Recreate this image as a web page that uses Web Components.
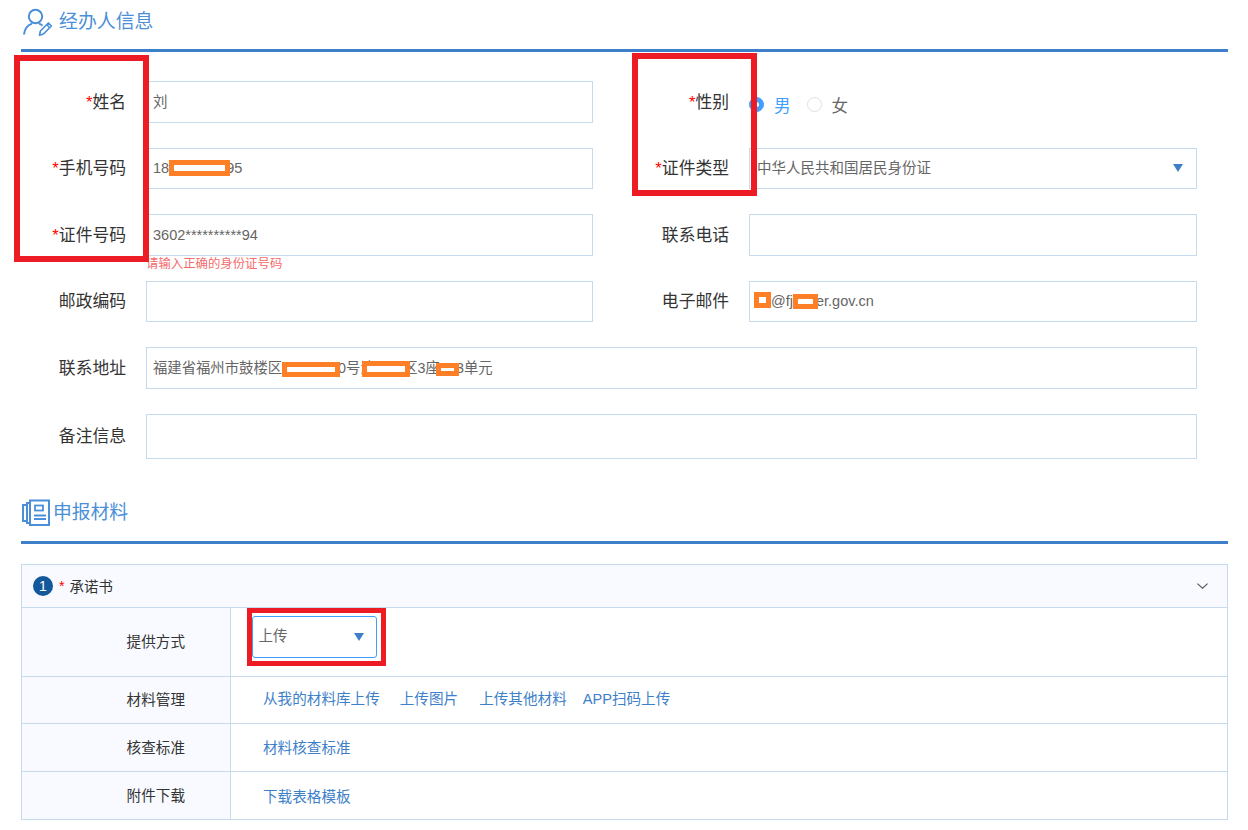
<!DOCTYPE html>
<html lang="zh">
<head>
<meta charset="utf-8">
<title>经办人信息</title>
<style>
    html, body { margin: 0; padding: 0; background: #fff; }
    body { font-family: "Liberation Sans", "Noto Sans CJK SC", sans-serif; }
</style>
</head>
<body>
<apply-page></apply-page>

<script>
const INK = '"Liberation Sans", "Noto Sans CJK SC", sans-serif';

// orange censor block, overlaps the text on either side
class RedactMark extends HTMLElement {
    connectedCallback() {
        const w = this.getAttribute('w') || '60';
        const h = this.getAttribute('h') || '16';
        const under = this.getAttribute('under') || '0';
        const over = this.getAttribute('over') || '0';
        const dy = this.getAttribute('dy') || '0';
        this.attachShadow({ mode: 'open' });
        this.shadowRoot.innerHTML = `
            <style>
                :host {
                    display: inline-block;
                    box-sizing: border-box;
                    width: ${w}px;
                    height: ${h}px;
                    margin-left: -${under}px;
                    margin-right: -${over}px;
                    border: solid #ff7f27;
                    border-width: 5px;
                    background: #fff;
                    vertical-align: middle;
                    position: relative;
                    top: ${dy}px;
                }
            </style>
        `;
    }
}

class SectionHead extends HTMLElement {
    connectedCallback() {
        const height = this.getAttribute('height') || '49';
        const low = this.getAttribute('low') || '10';
        const size = this.getAttribute('size') || '18.8';
        this.attachShadow({ mode: 'open' });
        this.shadowRoot.innerHTML = `
            <style>
                :host { display: block; margin: 0 20px 0 21px; }
                .head {
                    box-sizing: border-box;
                    display: flex;
                    align-items: center;
                    height: ${height}px;
                    padding: 0 0 ${low}px 1px;
                    color: #4a8fd8;
                    font-size: ${size}px;
                    font-family: ${INK};
                }
                .bar { height: 3px; background: #3d80c9; }
            </style>
            <div class="head"><slot name="icon"></slot><slot></slot></div>
            <div class="bar"></div>
        `;
    }
}

class FormField extends HTMLElement {
    connectedCallback() {
        const label = this.getAttribute('label') || '';
        const required = this.hasAttribute('required');
        const height = this.getAttribute('height') || '41.5';
        this.attachShadow({ mode: 'open' });
        this.shadowRoot.innerHTML = `
            <style>
                :host { display: grid; grid-template-columns: 105px 1fr; column-gap: 20px; align-items: center; position: relative; }
                .label { text-align: right; font-size: 16.8px; color: #333; white-space: nowrap; padding-bottom: 2px; }
                .label i { font-style: normal; color: #f00; }
                .box {
                    box-sizing: border-box;
                    height: ${height}px;
                    border: 1px solid #c6dcee;
                    padding: 0 6px;
                    display: flex;
                    align-items: center;
                    font-size: 14.5px;
                    color: #666;
                    white-space: nowrap;
                    background: #fff;
                }
                :host([bare]) .box { display: block; border: 0; padding: 0; }
                .msg { position: absolute; left: 125px; top: 40px; font-size: 12.4px; color: #f56c6c; white-space: nowrap; }
            </style>
            <div class="label">${required ? '<i>*</i>' : ''}${label}</div>
            <div class="box"><span><slot></slot></span></div>
            <div class="msg"><slot name="msg"></slot></div>
        `;
    }
}

class GenderRadio extends HTMLElement {
    connectedCallback() {
        this.attachShadow({ mode: 'open' });
        this.shadowRoot.innerHTML = `
            <style>
                :host { display: flex; align-items: center; box-sizing: border-box; height: 41.5px; padding-top: 6px; font-size: 16.6px; color: #666; }
                .dot { box-sizing: border-box; width: 15px; height: 15px; border-radius: 50%; border: 1px solid #dcdfe6; margin-right: 10px; background: #fff; }
                .on { background: #409eff; border-color: #409eff; position: relative; }
                .on::after { content: ""; position: absolute; left: 4px; top: 4px; width: 5px; height: 5px; border-radius: 50%; background: #fff; }
                .sel { color: #409eff; margin-right: 16px; }
            </style>
            <span class="dot on"></span><span class="sel">男</span>
            <span class="dot"></span><span>女</span>
        `;
    }
}

class SelectBox extends HTMLElement {
    connectedCallback() {
        this.attachShadow({ mode: 'open' });
        this.shadowRoot.innerHTML = `
            <style>
                :host {
                    display: flex; align-items: center; justify-content: space-between;
                    box-sizing: border-box;
                    height: 41.5px;
                    padding: 0 13px 0 7px;
                    border: 1px solid #c6dcee;
                    font-size: 14.5px;
                    color: #666;
                    background: #fff;
                }
                :host([focus]) { border-color: #409eff; border-radius: 3px; padding: 0 12px 0 5.5px; }
                .val { padding-bottom: 3px; }
                :host([focus]) .val { padding-bottom: 5px; }
                .arrow { width: 0; height: 0; border: solid transparent; border-width: 8px 5px 0; border-top-color: #3d80c9; }
            </style>
            <span class="val"><slot></slot></span>
            <span class="arrow"></span>
        `;
    }
}

class MatRow extends HTMLElement {
    connectedCallback() {
        const label = this.getAttribute('label') || '';
        const height = this.getAttribute('height') || '47';
        const pad = this.getAttribute('pad') || '32';
        const lift = this.getAttribute('lift') || '0';
        this.attachShadow({ mode: 'open' });
        this.shadowRoot.innerHTML = `
            <style>
                :host {
                    display: grid;
                    grid-template-columns: 209px 1fr;
                    height: ${height}px;
                    box-sizing: border-box;
                    border-top: 1px solid #c6dcee;
                }
                .label {
                    background: #f8faff;
                    border-right: 1px solid #c6dcee;
                    padding: 0 45px 2px 0;
                    display: flex;
                    align-items: center;
                    justify-content: flex-end;
                    font-size: 14.6px;
                    color: #333;
                }
                .cell { display: flex; align-items: center; padding: 0 0 ${lift}px ${pad}px; font-size: 14.6px; color: #3d80c9; }
            </style>
            <div class="label">${label}</div>
            <div class="cell"><slot></slot></div>
        `;
    }
}

class MatPanel extends HTMLElement {
    connectedCallback() {
        const index = this.getAttribute('index') || '1';
        const title = this.getAttribute('title') || '';
        this.attachShadow({ mode: 'open' });
        this.shadowRoot.innerHTML = `
            <style>
                :host { display: block; margin: 20px 20px 0 21px; border: 1px solid #c6dcee; }
                .top {
                    display: flex; align-items: center;
                    height: 42px;
                    padding: 0 19px 0 11px;
                    background: #f8faff;
                    font-size: 14.4px;
                    color: #333;
                }
                .num { width: 20px; height: 20px; border-radius: 50%; background: #14589c; color: #fff; font-size: 14px; line-height: 20px; text-align: center; margin-right: 6px; }
                .star { color: #f00; margin-right: 5px; }
                .chev { margin-left: auto; }
            </style>
            <div class="top">
                <span class="num">${index}</span><span class="star">*</span><span>${title}</span>
                <svg class="chev" width="11" height="6" viewBox="0 0 11 6" fill="none" stroke="#555" stroke-width="1.1"><path d="M.4.6 5.5 5.2 10.6.6"/></svg>
            </div>
            <slot></slot>
        `;
    }
}

class ApplyPage extends HTMLElement {
    connectedCallback() {
        this.attachShadow({ mode: 'open' });
        this.shadowRoot.innerHTML = `
            <style>
                :host { display: block; width: 1248px; height: 830px; position: relative; overflow: hidden; font-family: ${INK}; }
                .form {
                    display: grid;
                    grid-template-columns: 572px 573px;
                    column-gap: 31px;
                    row-gap: 25px;
                    margin: 29px 0 0 21px;
                    width: 1176px;
                }
                .wide { grid-column: 1 / 3; }
                .docs { margin-top: 32px; }
                .ring { position: absolute; box-sizing: border-box; border: 6px solid #ed1c24; outline: 1px solid rgba(237,28,36,.35); outline-offset: -1px; pointer-events: none; }
                .links { display: flex; }
                .links a:nth-child(2) { margin-left: 20px; }
                .links a:nth-child(3) { margin-left: 21px; }
                .links a:nth-child(4) { margin-left: 16px; }
                a { color: #3d80c9; text-decoration: none; }
                select-box.mini { width: 125px; height: 42px; }
            </style>
            <section-head height="49" low="10" size="18.9">
                <svg slot="icon" width="30" height="30" viewBox="0 0 30 30" fill="none" stroke="#4a8fd8" stroke-width="2" style="margin:6px 7px 0 0">
                    <circle cx="13.5" cy="8.5" r="6.7"/>
                    <path d="M2 26.5C2.5 21 6 17 10 15.6M17 15.6c1.4.5 2.5 1 3.5 2"/>
                    <path d="M17.5 27.2l.9-4.2 8-8 3 3-8 8z" stroke-width="1.7" stroke-linejoin="round"/>
                    <path d="M24.5 16.5l3 3" stroke-width="1.4"/>
                </svg>
                经办人信息
            </section-head>
            <div class="form">
                <form-field label="姓名" required><span style="display:inline-block;padding-bottom:3px">刘</span></form-field>
                <form-field label="性别" required bare><gender-radio></gender-radio></form-field>
                <form-field label="手机号码" required>18<redact-mark w="61" h="16" over="4" dy="-1"></redact-mark>95</form-field>
                <form-field label="证件类型" required bare><select-box>中华人民共和国居民身份证</select-box></form-field>
                <form-field label="证件号码" required>3602**********94<span slot="msg">请输入正确的身份证号码</span></form-field>
                <form-field label="联系电话"></form-field>
                <form-field label="邮政编码"></form-field>
                <form-field label="电子邮件"><redact-mark w="17" h="16" under="2" dy="-2"></redact-mark>@fj<redact-mark w="25" h="15" over="2"></redact-mark>er.gov.cn</form-field>
                <form-field label="联系地址" class="wide"><span style="display:inline-block;font-size:14.35px;padding-bottom:2px">福建省福州市鼓楼区<redact-mark w="58" h="15" over="2"></redact-mark>0号滨<redact-mark w="48" h="16" under="12.5" over="7"></redact-mark>区3座<redact-mark w="23" h="13" under="3.5" over="3.5"></redact-mark>3单元</span></form-field>
                <form-field label="备注信息" class="wide" height="45"></form-field>
            </div>
            <section-head class="docs" height="50" low="10">
                <svg slot="icon" width="29" height="28" viewBox="0 0 29 28" fill="none" stroke="#4a8fd8" stroke-width="2" style="margin:5px 2px 0 0">
                    <rect x="8" y="1.5" width="19" height="24.5"/>
                    <path d="M8 4H5v20h3M5 6H1v16h4"/>
                    <rect x="13" y="6.5" width="8" height="5" stroke-width="1.8"/>
                    <path d="M12 16.5h12M12 20h12" stroke-width="1.8"/>
                </svg>
                申报材料
            </section-head>
            <mat-panel index="1" title="承诺书">
                <mat-row label="提供方式" height="69" pad="21" lift="9"><select-box class="mini" focus>上传</select-box></mat-row>
                <mat-row label="材料管理" height="47" lift="4"><div class="links"><a>从我的材料库上传</a><a>上传图片</a><a>上传其他材料</a><a>APP扫码上传</a></div></mat-row>
                <mat-row label="核查标准" height="48" lift="2"><a>材料核查标准</a></mat-row>
                <mat-row label="附件下载" height="48"><a>下载表格模板</a></mat-row>
            </mat-panel>
            <div class="ring" style="left:14px;top:55px;width:135px;height:207px"></div>
            <div class="ring" style="left:632px;top:53px;width:125px;height:143px"></div>
            <div class="ring" style="left:247px;top:608px;width:139px;height:58px;border-width:5px"></div>
        `;
    }
}

customElements.define('redact-mark', RedactMark);
customElements.define('section-head', SectionHead);
customElements.define('form-field', FormField);
customElements.define('gender-radio', GenderRadio);
customElements.define('select-box', SelectBox);
customElements.define('mat-row', MatRow);
customElements.define('mat-panel', MatPanel);
customElements.define('apply-page', ApplyPage);
</script>
</body>
</html>
